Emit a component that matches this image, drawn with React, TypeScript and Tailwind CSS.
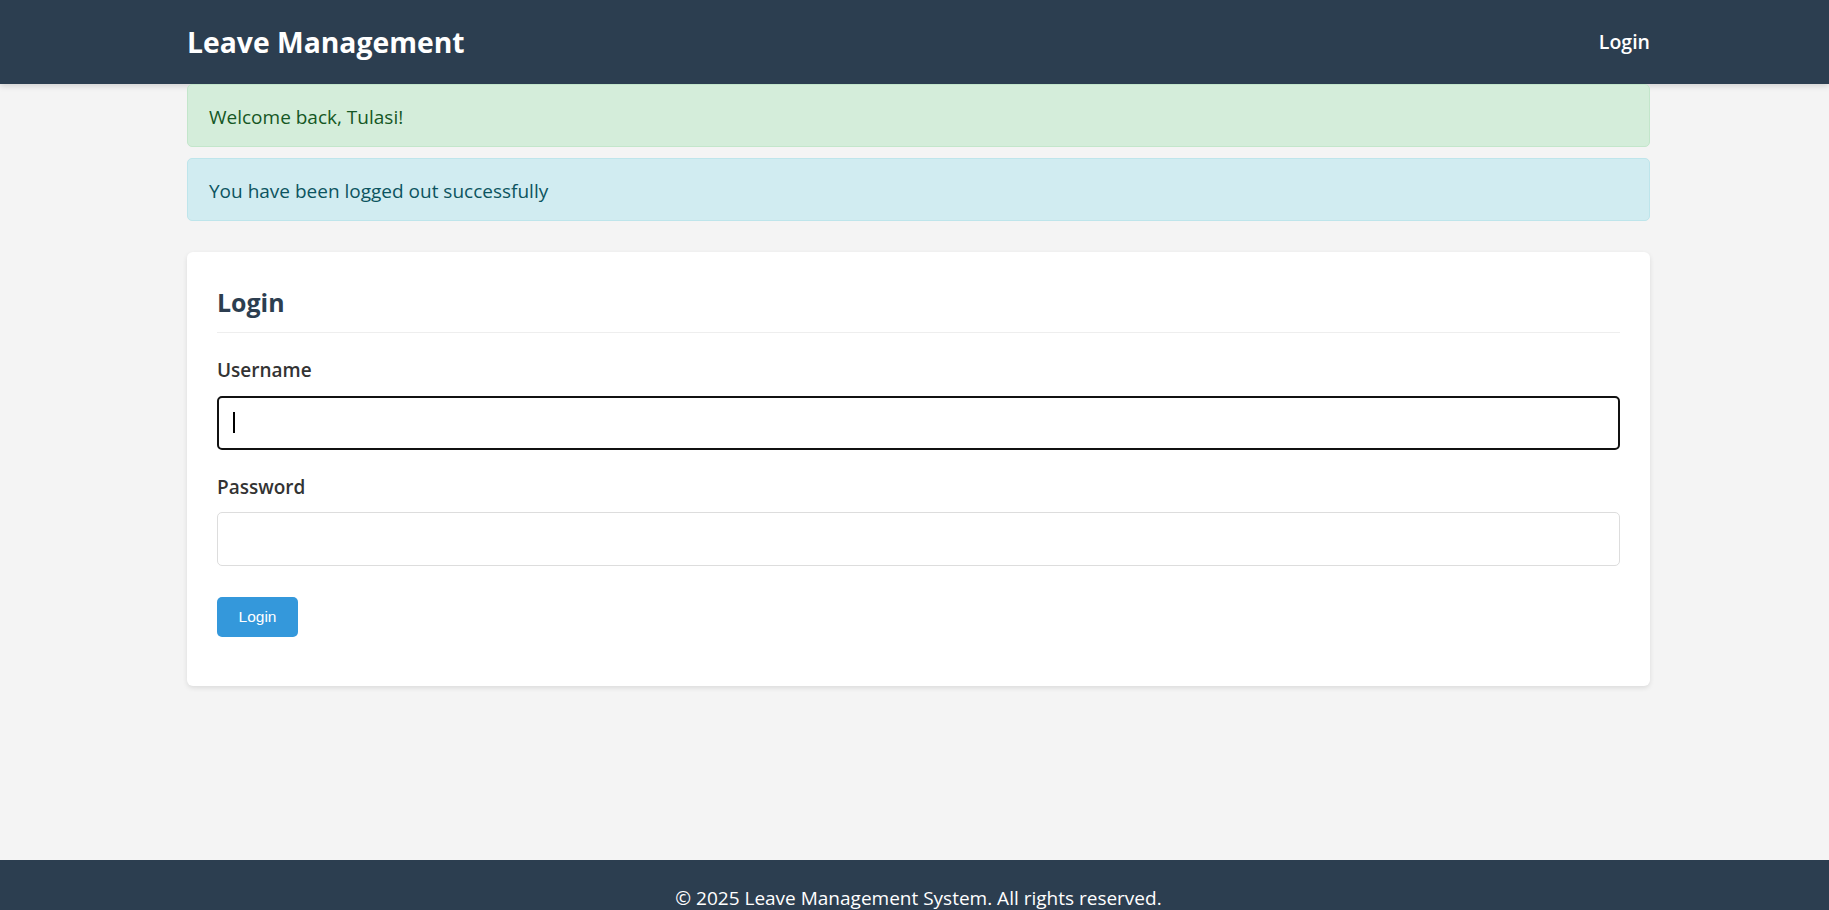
import { useState } from "react";

function Alert({ tone, children }: { tone: "success" | "info"; children: React.ReactNode }) {
    const styles =
        tone === "success"
            ? "bg-[#d4edda] border-[#c3e6cb] text-[#155724]"
            : "bg-[#d1ecf1] border-[#bee5eb] text-[#0c5460]";
    return (
        <div className={`flex h-[63px] items-center rounded-[5px] border px-[21px] pt-[3px] text-[19px] ${styles}`}>
            {children}
        </div>
    );
}

export default function App() {
    const [username, setUsername] = useState("");
    const [password, setPassword] = useState("");

    return (
        <div className="flex min-h-screen flex-col bg-[#f4f4f4] font-['Open_Sans',sans-serif]">
            {/* Header */}
            <header className="h-[84px] bg-[#2c3e50] shadow-[0_2px_6px_rgba(0,0,0,0.15)]">
                <div className="ml-[187px] flex h-full w-[1463px] items-center justify-between">
                    <h1 className="text-[28.3px] font-bold text-white">Leave Management</h1>
                    <a href="#" className="text-[19.5px] font-semibold text-white">
                        Login
                    </a>
                </div>
            </header>

            {/* Main */}
            <main className="min-h-[776px]">
                <div className="ml-[187px] w-[1463px]">
                    <div className="flex flex-col gap-[11px]">
                        <Alert tone="success">Welcome back, Tulasi!</Alert>
                        <Alert tone="info">You have been logged out successfully</Alert>
                    </div>

                    {/* Login card */}
                    <div className="mt-[31px] rounded-[6px] bg-white px-[30px] pt-[30px] pb-[49px] shadow-[0_2px_5px_rgba(0,0,0,0.1)]">
                        <h2 className="border-b border-[#eeeeee] pt-[6px] pb-[15px] text-[24.9px] leading-[29px] font-bold text-[#2c3e50]">
                            Login
                        </h2>

                        <form onSubmit={(e) => e.preventDefault()}>
                            <label htmlFor="username" className="mt-[23px] mb-[12px] block text-[19px] leading-[28px] font-semibold text-[#333]">
                                Username
                            </label>
                            <div className="relative">
                                <input
                                    id="username"
                                    value={username}
                                    onChange={(e) => setUsername(e.target.value)}
                                    className="block h-[54px] w-full rounded-[5px] border-2 border-[#111] px-[14px] text-[19px] outline-none"
                                />
                                {/* text caret of the focused field */}
                                {username === "" && (
                                    <span className="pointer-events-none absolute top-[16px] left-[16px] h-[21px] w-[2px] bg-black" />
                                )}
                            </div>

                            <label htmlFor="password" className="mt-[23px] mb-[11px] block text-[19px] leading-[28px] font-semibold text-[#333]">
                                Password
                            </label>
                            <input
                                id="password"
                                type="password"
                                value={password}
                                onChange={(e) => setPassword(e.target.value)}
                                className="block h-[54px] w-full rounded-[5px] border border-[#dddddd] px-[14px] text-[19px] outline-none"
                            />

                            <button
                                type="submit"
                                className="mt-[31px] flex h-[40px] w-[81px] items-center justify-center rounded-[5px] bg-[#3498db] font-['Liberation_Sans',sans-serif] text-[15.5px] text-white"
                            >
                                Login
                            </button>
                        </form>
                    </div>
                </div>
            </main>

            {/* Footer */}
            <footer className="bg-[#2c3e50] pt-[24px] pb-[24px] text-center text-[19px] leading-[28px] text-white">
                <div className="ml-[187px] w-[1463px]">© 2025 Leave Management System. All rights reserved.</div>
            </footer>
        </div>
    );
}
